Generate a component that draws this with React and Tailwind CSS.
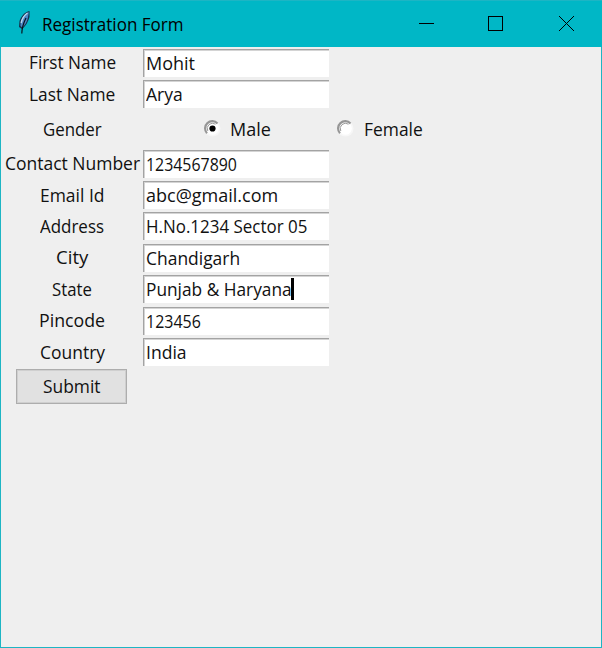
import { useLayoutEffect, useRef, useState } from "react";

// Single line of text scaled horizontally to a given advance width.
function Text({ children, w }) {
  const ref = useRef(null);
  const [scale, setScale] = useState(1);
  useLayoutEffect(() => {
    setScale(w / ref.current.offsetWidth);
  }, [w]);
  return (
    <span className="block h-6 shrink-0 whitespace-nowrap leading-6" style={{ width: w }}>
      <span ref={ref} className="inline-block origin-left" style={{ transform: `scaleX(${scale})` }}>
        {children}
      </span>
    </span>
  );
}

function Row({ label, lw, value, vw, caret }) {
  return (
    <div className="flex h-[31.45px] items-center">
      <div className="flex w-[142px] shrink-0 justify-center pb-px">
        <Text w={lw}>{label}</Text>
      </div>
      <div className="flex h-[28px] w-[186px] items-center border-t border-l border-[#a3a3a3] bg-white pb-px pl-[2px] shadow-[inset_1px_1px_0_#d4d4d4]">
        <Text w={vw}>{value}</Text>
        {caret && <span className="-ml-px h-[22px] w-[3px] bg-black" />}
      </div>
    </div>
  );
}

function Radio({ checked }) {
  return (
    <svg className="shrink-0" width="18" height="18" viewBox="0 0 18 18">
      <circle cx="9.500" cy="8.500" r="8" fill="#f7f7f7" />
      <circle cx="9.500" cy="8.500" r="6.300" fill="#fff" />
      <path d="M4 13.2A7 7 0 0 1 14.500 3.500" fill="none" stroke="#969696" strokeWidth="2.200" />
      <path d="M4.800 11A5.300 5.300 0 0 1 12.500 4.200" fill="none" stroke="#808080" strokeWidth=".8" />
      {checked && <circle cx="9.500" cy="8.500" r="3.100" fill="#000" />}
    </svg>
  );
}

function Feather() {
  return (
    <svg width="15" height="25" viewBox="0 0 15 25">
      <path d="M12.500 1C8 2 4 6 2.500 11L2 17l3 2c4-3 6-7 7.500-12Z" fill="#14304c" />
      <path d="M11.800 2C7.500 4 4.500 8 3.600 12L3.500 16l1.800 1.500C9 14 11 10 11.800 2Z" fill="#4d86c6" />
      <path d="M10.500 3C7.500 5 5 9 4.200 13" fill="none" stroke="#bcd6ea" strokeWidth="1.400" />
      <path d="M9 8C7 12 5 16 4.800 23.500" fill="none" stroke="#07121c" strokeWidth="1.200" />
    </svg>
  );
}

const rows = [
  { label: "Contact Number", lw: 135, value: "1234567890", vw: 91 },
  { label: "Email Id", lw: 64, value: "abc@gmail.com", vw: 132 },
  { label: "Address", lw: 64, value: "H.No.1234 Sector 05", vw: 161 },
  { label: "City", lw: 32, value: "Chandigarh", vw: 94 },
  { label: "State", lw: 40, value: "Punjab & Haryana", vw: 146, caret: true },
  { label: "Pincode", lw: 66, value: "123456", vw: 55 },
  { label: "Country", lw: 65, value: "India", vw: 41 },
];

export default function App() {
  return (
    <div className="flex h-[648px] w-[602px] flex-col border border-t-0 border-[#1db5c4] bg-[#efefef] font-['Open_Sans','Noto_Sans',sans-serif] text-[18px] text-[#111]">
      <header className="-mx-px flex h-[47px] shrink-0 items-center border-t border-[#1db5c4] bg-[#00b7c6] pl-[17px] text-black">
        <div className="-mt-[3px]">
          <Feather />
        </div>
        <div className="ml-[10px] text-[18px]">
          <Text w={142}>Registration Form</Text>
        </div>
        <svg className="-mt-px ml-auto mr-[27px]" width="157" height="17" viewBox="0 0 157 17" fill="none" stroke="#000">
          <path d="M1 8.500h15" />
          <rect x="70.500" y="1.500" width="14" height="14" />
          <path d="M141 1l15 15M156 1l-15 15" />
        </svg>
      </header>
      <form className="flex flex-col">
        <Row label="First Name" lw={87} value="Mohit" vw={49} />
        <Row label="Last Name" lw={86} value="Arya" vw={37} />
        <div className="flex h-[38px] items-center">
          <div className="flex w-[142px] shrink-0 justify-center">
            <Text w={59}>Gender</Text>
          </div>
          <div className="flex items-center pl-[60px]">
            <Radio checked />
            <div className="ml-[9px] flex w-[106px]">
              <Text w={41}>Male</Text>
            </div>
            <Radio />
            <div className="ml-[10px]">
              <Text w={59}>Female</Text>
            </div>
          </div>
        </div>
        {rows.map((r) => (
          <Row key={r.label} {...r} />
        ))}
        <button type="button" className="ml-[15px] mt-px flex h-[35px] w-[111px] items-center justify-center border border-[#adadad] bg-[#e1e1e1] shadow-[inset_0_0_0_1px_#cfcfcf]">
          <Text w={58}>Submit</Text>
        </button>
      </form>
    </div>
  );
}
